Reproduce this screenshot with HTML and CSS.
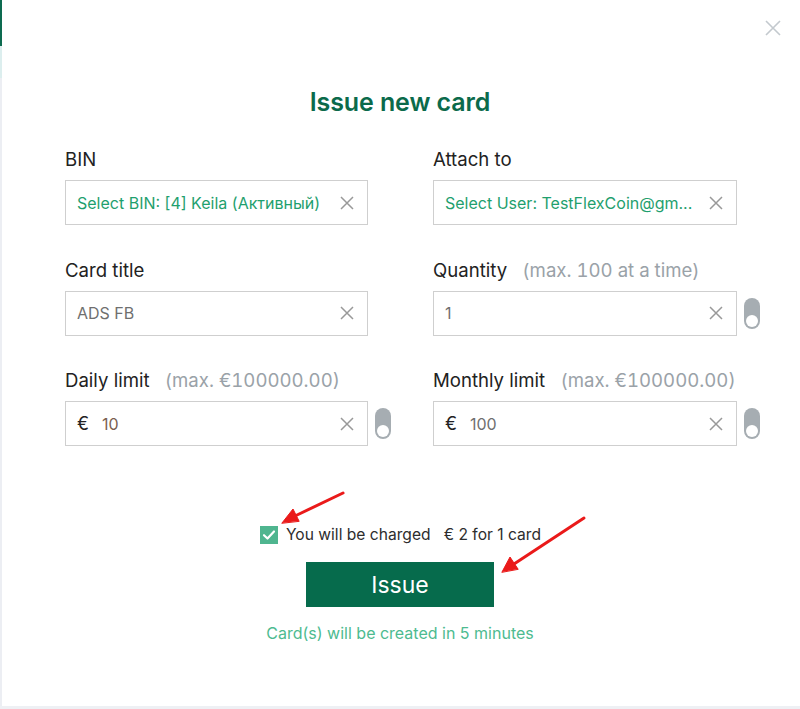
FILE: index.html
```html
<!DOCTYPE html>
<html>
<head>
<meta charset="utf-8">
<link rel="stylesheet" href="styles.css">
</head>
<body>
<div class="page">
  <div class="edge"><span class="edge-top"></span><span class="edge-mid"></span><span class="edge-rest"></span></div>
  <div class="modal">
    <button class="close" aria-label="Close">
      <svg width="18" height="18" viewBox="0 0 18 18"><path d="M2 2L16 16M16 2L2 16" stroke="#c3c9ce" stroke-width="1.6" fill="none"/></svg>
    </button>
    <h1 class="title">Issue new card</h1>
    <div class="form">
      <div class="field">
        <div class="label">BIN</div>
        <div class="row">
          <div class="input"><span class="val green">Select BIN: [4] Keila (Активный)</span><span class="x"><svg width="14" height="14" viewBox="0 0 14 14"><path d="M1 1L13 13M13 1L1 13" stroke="#999" stroke-width="1.5"/></svg></span></div>
        </div>
      </div>
      <div class="field">
        <div class="label">Attach to</div>
        <div class="row">
          <div class="input"><span class="val green">Select User: TestFlexCoin@gm...</span><span class="x"><svg width="14" height="14" viewBox="0 0 14 14"><path d="M1 1L13 13M13 1L1 13" stroke="#999" stroke-width="1.5"/></svg></span></div>
        </div>
      </div>
      <div class="field">
        <div class="label">Card title</div>
        <div class="row">
          <div class="input"><span class="val">ADS FB</span><span class="x"><svg width="14" height="14" viewBox="0 0 14 14"><path d="M1 1L13 13M13 1L1 13" stroke="#999" stroke-width="1.5"/></svg></span></div>
        </div>
      </div>
      <div class="field">
        <div class="label">Quantity <span class="hint">(max. 100 at a time)</span></div>
        <div class="row">
          <div class="input"><span class="val">1</span><span class="x"><svg width="14" height="14" viewBox="0 0 14 14"><path d="M1 1L13 13M13 1L1 13" stroke="#999" stroke-width="1.5"/></svg></span></div>
          <span class="toggle"><span class="knob"></span></span>
        </div>
      </div>
      <div class="field">
        <div class="label">Daily limit <span class="hint">(max. €100000.00)</span></div>
        <div class="row">
          <div class="input"><span class="cur">€</span><span class="val warm">10</span><span class="x"><svg width="14" height="14" viewBox="0 0 14 14"><path d="M1 1L13 13M13 1L1 13" stroke="#999" stroke-width="1.5"/></svg></span></div>
          <span class="toggle"><span class="knob"></span></span>
        </div>
      </div>
      <div class="field">
        <div class="label">Monthly limit <span class="hint">(max. €100000.00)</span></div>
        <div class="row">
          <div class="input"><span class="cur">€</span><span class="val">100</span><span class="x"><svg width="14" height="14" viewBox="0 0 14 14"><path d="M1 1L13 13M13 1L1 13" stroke="#999" stroke-width="1.5"/></svg></span></div>
          <span class="toggle"><span class="knob"></span></span>
        </div>
      </div>
    </div>
    <div class="charge">
      <span class="check"><svg width="18" height="18" viewBox="0 0 18 18"><path d="M4 9.2L7.5 12.5L14 5.5" stroke="#fff" stroke-width="2.2" fill="none" stroke-linecap="round" stroke-linejoin="round"/></svg></span>
      <span class="charge-text">You will be charged&nbsp;&nbsp; € 2 for 1 card</span>
    </div>
    <button class="issue">Issue</button>
    <div class="note">Card(s) will be created in 5 minutes</div>
  </div>
  <div class="bottom"></div>
  <svg class="arrows" width="800" height="709" viewBox="0 0 800 709">
    <g stroke="#ea1a1a" stroke-width="3" fill="#ea1a1a" stroke-linecap="round">
      <line x1="343" y1="493" x2="295" y2="516"/>
      <polygon points="282,523 293,509 299,521" stroke-width="1"/>
      <line x1="584" y1="518" x2="514" y2="564"/>
      <polygon points="502,572 510,557 518,569" stroke-width="1"/>
    </g>
  </svg>
</div>
</body>
</html>
```

FILE: styles.css
```css
* { box-sizing: border-box; }
html, body { margin: 0; padding: 0; }
body {
  background: #ffffff;
  font-family: Inter, "Noto Sans", "DejaVu Sans", sans-serif;
  color: #222;
}
.page {
  position: relative;
  width: 800px;
  height: 709px;
  overflow: hidden;
  display: flex;
  flex-direction: column;
}
.edge {
  position: absolute;
  left: 0;
  top: 0;
  width: 2px;
  height: 706px;
  display: flex;
  flex-direction: column;
}
.edge-top { height: 46px; background: #0d6b50; }
.edge-mid { height: 32px; background: #dceeee; }
.edge-rest { flex: 1; background: #eceef3; }
.modal {
  position: relative;
  height: 706px;
  padding-top: 86px;
  display: flex;
  flex-direction: column;
  align-items: center;
}
.close {
  position: absolute;
  right: 18px;
  top: 19px;
  border: 0;
  background: none;
  padding: 0;
  width: 18px;
  height: 18px;
}
.title {
  margin: 0;
  font-size: 25px;
  line-height: 32px;
  font-weight: 600;
  color: #0b6a4b;
  letter-spacing: -0.1px;
}
.form {
  margin-top: 29px;
  display: grid;
  grid-template-columns: 303px 304px;
  column-gap: 65px;
  row-gap: 32.5px;
  align-self: flex-start;
  margin-left: 65px;
}
.label {
  font-size: 18.6px;
  line-height: 24px;
  color: #222;
  margin-bottom: 9px;
  white-space: nowrap;
}
.hint {
  color: #9aa2a8;
  margin-left: 10px;
  font-variant-numeric: tabular-nums;
}
.row {
  display: flex;
  align-items: center;
  gap: 7px;
}
.input {
  flex: 0 0 auto;
  width: 100%;
  height: 45px;
  border: 1px solid #cfcfcf;
  display: flex;
  align-items: center;
  padding: 0 12px 0 11px;
  font-size: 16px;
  color: #6f6f6f;
}
.row .input { width: 303px; }
.form .field:nth-child(even) .input { width: 304px; }
.val { flex: 1; white-space: nowrap; overflow: hidden; }
.green { color: #1fa06e; }
.warm { color: #7a5f50; }
.cur {
  color: #222;
  font-size: 18px;
  margin-right: 13px;
}
.x { display: flex; width: 14px; height: 14px; margin-right: 1px; }
.toggle {
  position: relative;
  flex: 0 0 16px;
  width: 16px;
  height: 31px;
  border-radius: 8px;
  background: #a6adb2;
}
.knob {
  position: absolute;
  left: 2px;
  bottom: 2px;
  width: 12px;
  height: 12px;
  border-radius: 50%;
  background: #fff;
}
.charge {
  margin-top: 78px;
  display: flex;
  align-items: center;
  gap: 8px;
  margin-left: 1px;
}
.check {
  width: 18px;
  height: 18px;
  background: #4fb58f;
  display: flex;
}
.charge-text {
  font-size: 15.6px;
  line-height: 22px;
  color: #2d2d2d;
}
.issue {
  margin-top: 16px;
  width: 188px;
  height: 45px;
  border: 0;
  background: #066b4c;
  color: #fff;
  font-family: Inter, "Noto Sans", sans-serif;
  font-size: 23px;
  font-weight: 400;
}
.note {
  margin-top: 16px;
  font-size: 16px;
  line-height: 20px;
  color: #4dbb90;
}
.bottom {
  height: 3px;
  background: #eef0f4;
}
.arrows {
  position: absolute;
  left: 0;
  top: 0;
  pointer-events: none;
}
```
